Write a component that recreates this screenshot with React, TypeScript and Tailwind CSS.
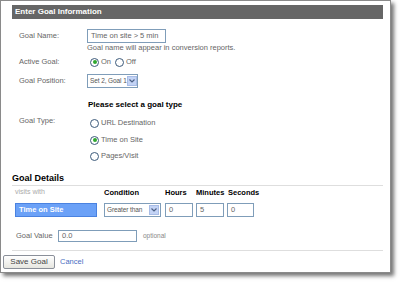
const font = { fontFamily: '"Liberation Sans", Arial, sans-serif' };

const Radio = ({ checked }: { checked?: boolean }) => (
  <span className="w-[9px] h-[9px] rounded-full border border-[#3c5a7a] bg-white flex items-center justify-center shrink-0">
    {checked && <span className="w-[4px] h-[4px] rounded-full bg-[#2fa82f]" />}
  </span>
);

const Select = ({ label, width }: { label: string; width: string }) => (
  <div className={`${width} h-[14px] border border-[#7f9db9] bg-white flex items-center justify-between pl-[2px] pr-[1px]`}>
    <span className="text-[6.5px] tracking-[-0.1px] text-[#555] whitespace-nowrap">{label}</span>
    <span className="w-[10px] h-[10px] bg-[#c3d3f5] border border-[#a8bce6] flex items-center justify-center shrink-0">
      <svg width="6" height="4" viewBox="0 0 6 4">
        <path d="M0.5 0.5 L3 3 L5.5 0.5" fill="none" stroke="#4d6185" strokeWidth="1.2" />
      </svg>
    </span>
  </div>
);

const Field = ({ value, width }: { value: string; width: string }) => (
  <div className={`${width} h-[14px] border border-[#7f9db9] bg-white flex items-center pl-[3px] text-[7.5px] text-[#666]`}>
    {value}
  </div>
);

const Label = ({ children }: { children: React.ReactNode }) => (
  <span className="w-[68px] shrink-0 text-[7.5px] text-[#666]">{children}</span>
);

export default function App() {
  return (
    <div className="w-[400px] h-[282px] bg-white overflow-hidden" style={font}>
      <div className="w-[391px] h-[273px] border border-[#8a8a8a] bg-white shadow-[3px_3px_4px_rgba(0,0,0,0.55)] flex flex-col">
        <div className="ml-[11px] mt-[4px] w-[371px] h-[14px] bg-[#666666] flex items-center pl-[3px] text-white font-bold text-[8px]">
          Enter Goal Information
        </div>

        <div className="ml-[18px] mt-[10px] h-[14px] flex items-center">
          <Label>Goal Name:</Label>
          <Field value="Time on site > 5 min" width="w-[79px]" />
        </div>
        <div className="ml-[86px] h-[9px] leading-[9px] text-[7.5px] text-[#666]">
          Goal name will appear in conversion reports.
        </div>

        <div className="ml-[18px] mt-[3px] h-[14px] flex items-center">
          <Label>Active Goal:</Label>
          <div className="flex items-center gap-[2px] ml-[3px] text-[7.5px] text-[#666]">
            <Radio checked />
            <span className="mr-[2px]">On</span>
            <Radio />
            <span>Off</span>
          </div>
        </div>

        <div className="ml-[18px] mt-[5px] h-[14px] flex items-center">
          <Label>Goal Position:</Label>
          <Select label="Set 2, Goal 1" width="w-[51px]" />
        </div>

        <div className="ml-[87px] mt-[11px] h-[12px] flex items-center text-[8px] font-bold text-black">
          Please select a goal type
        </div>

        <div className="ml-[18px] mt-[5px] flex">
          <span className="w-[68px] shrink-0 text-[7.5px] text-[#666] leading-[10px]">Goal Type:</span>
          <div className="flex flex-col ml-[3px] text-[7.5px] text-[#666]">
            <div className="h-[14px] flex items-center gap-[2px]"><Radio /><span>URL Destination</span></div>
            <div className="h-[14px] mt-[3px] flex items-center gap-[2px]"><Radio checked /><span>Time on Site</span></div>
            <div className="h-[14px] mt-[2px] flex items-center gap-[2px]"><Radio /><span>Pages/Visit</span></div>
          </div>
        </div>

        <div className="ml-[11px] mt-[10px] w-[371px] h-[13px] border-b border-[#dedede] flex items-center text-[9px] font-bold text-black">
          Goal Details
        </div>

        <div className="ml-[14px] mt-[1px] h-[11px] flex items-center text-[7.5px]">
          <span className="w-[89px] text-[#aaa] text-[7px]">visits with</span>
          <span className="w-[61px] font-bold text-black">Condition</span>
          <span className="w-[31px] font-bold text-black">Hours</span>
          <span className="w-[32px] font-bold text-black">Minutes</span>
          <span className="font-bold text-black">Seconds</span>
        </div>

        <div className="ml-[14px] mt-[5px] h-[14px] flex items-center">
          <div className="w-[82px] h-[14px] bg-[#6ba1f7] border border-[#4a82e0] flex items-center pl-[3px] text-white font-bold text-[7.5px]">
            Time on Site
          </div>
          <div className="ml-[7px]">
            <Select label="Greater than" width="w-[57px]" />
          </div>
          <div className="ml-[4px]"><Field value="0" width="w-[28px]" /></div>
          <div className="ml-[3px]"><Field value="5" width="w-[28px]" /></div>
          <div className="ml-[3px]"><Field value="0" width="w-[27px]" /></div>
        </div>

        <div className="ml-[15px] mt-[13px] h-[12px] flex items-center text-[7.5px] text-[#666]">
          <span className="w-[42px]">Goal Value</span>
          <div className="w-[79px] h-[12px] border border-[#7f9db9] flex items-center pl-[3px]">0.0</div>
          <span className="ml-[6px] text-[6.5px] text-[#888]">optional</span>
        </div>

        <div className="ml-[11px] mt-[8px] w-[371px] border-b border-[#dedede]" />

        <div className="ml-[2px] mt-[4px] h-[14px] flex items-center">
          <button className="w-[52px] h-[14px] border border-[#8a8f99] rounded-[2px] bg-gradient-to-b from-white to-[#e6e6e0] text-[8px] text-[#444]">
            Save Goal
          </button>
          <span className="ml-[5px] text-[7.5px] text-[#4a6ec2]">Cancel</span>
        </div>
      </div>
    </div>
  );
}
